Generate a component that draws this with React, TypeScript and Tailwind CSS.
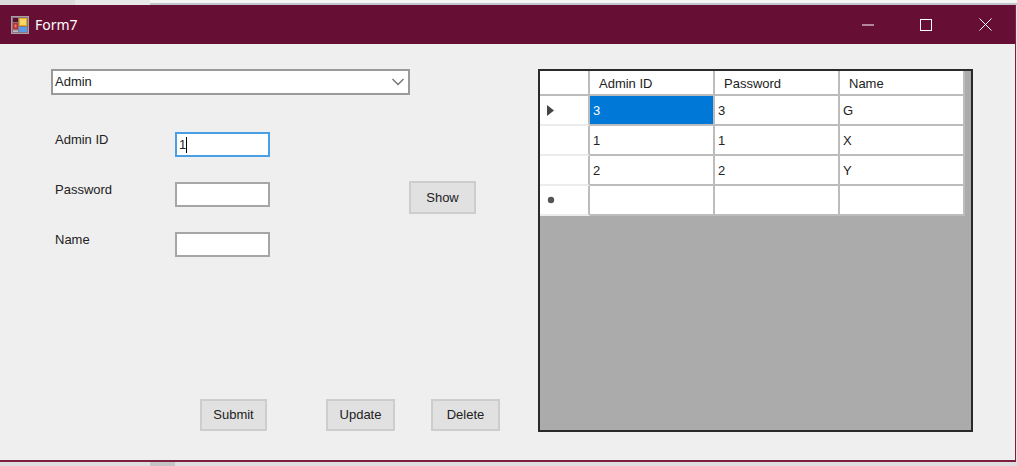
const font = "font-['Liberation_Sans',Arial,sans-serif]";

const columns = ["Admin ID", "Password", "Name"];
const rows = [
  ["3", "3", "G"],
  ["1", "1", "X"],
  ["2", "2", "Y"],
  ["", "", ""],
];

function FormIcon() {
  return (
    <svg width="18" height="18" viewBox="0 0 18 18" className="shrink-0">
      <rect x="0.5" y="0.5" width="17" height="17" fill="#8c7480" stroke="#a9a0a4" />
      <rect x="2" y="2" width="5" height="4" fill="#5a1030" />
      <rect x="2" y="7" width="5" height="6" fill="#b8322f" />
      <rect x="3.5" y="8.5" width="2" height="3" fill="#e87a6a" />
      <rect x="8" y="2" width="8" height="8" fill="#e0a820" />
      <rect x="9" y="3" width="6" height="6" fill="#f7d860" />
      <rect x="8" y="11" width="8" height="5" fill="#5b9be8" />
      <rect x="2" y="14.5" width="5" height="1.5" fill="#c9bcc2" />
    </svg>
  );
}

function WindowButtons() {
  return (
    <div className="flex items-center">
      <svg width="12" height="2" viewBox="0 0 12 2" className="mr-[46px]">
        <rect width="12" height="1" y="0.5" fill="#fff" />
      </svg>
      <svg width="12" height="12" viewBox="0 0 12 12" className="mr-[47px]">
        <rect x="0.5" y="0.5" width="11" height="11" fill="none" stroke="#fff" />
      </svg>
      <svg width="13" height="13" viewBox="0 0 13 13" className="mr-[23px]">
        <path d="M0.5 0.5L12.5 12.5M12.5 0.5L0.5 12.5" stroke="#fff" strokeWidth="1" />
      </svg>
    </div>
  );
}

function Field({ label, focused, children }: { label: string; focused?: boolean; children?: React.ReactNode }) {
  return (
    <div className="flex h-[25px] items-start">
      <span className="w-[124px] pl-[4px] text-[13px] leading-[16px] text-[#222]">{label}</span>
      <div
        className={`flex h-[25px] w-[95px] shrink-0 items-center bg-white pl-[2px] text-[13px] text-[#222] ${
          focused ? "border-2 border-[#4a9ee3]" : "border-2 border-[#a6a6a6]"
        }`}
      >
        {focused && (
          <>
            1<span className="h-[16px] w-px bg-black" />
          </>
        )}
      </div>
      {children}
    </div>
  );
}

function FormButton({ label, className }: { label: string; className: string }) {
  return (
    <button
      type="button"
      className={`shrink-0 border-2 border-[#cdcdcd] bg-[#e1e1e1] text-[13px] text-[#222] ${className}`}
    >
      {label}
    </button>
  );
}

function DataGrid() {
  const cell = "flex items-center border-r-2 border-b-2 border-[#bcbcbc] text-[13px]";
  return (
    <div className="mt-[25px] h-[363px] w-[435px] border-2 border-[#2a2a2a] bg-[#ababab]">
      <div className="grid w-[425px] grid-cols-[50px_125px_125px_125px] grid-rows-[25px_30px_30px_30px_30px]">
        <div className="border-r-2 border-b-2 border-[#bcbcbc] bg-white" />
        {columns.map((c) => (
          <div key={c} className={`${cell} bg-white pl-[9px] pt-[2px] text-[#222]`}>
            {c}
          </div>
        ))}
        {rows.map((row, r) => (
          <div key={r} className="contents">
            <div className="flex items-center border-r-2 border-b-2 border-r-[#bcbcbc] border-b-[#ececec] bg-white">
              {r === 0 && (
                <svg width="7" height="11" viewBox="0 0 7 11" className="ml-[7px]">
                  <path d="M0 0L7 5.5L0 11Z" fill="#444" />
                </svg>
              )}
              {r === 3 && (
                <svg width="8" height="8" viewBox="0 0 8 8" className="ml-[7px]">
                  <circle cx="4" cy="4" r="3.2" fill="#555" />
                </svg>
              )}
            </div>
            {row.map((v, c) => (
              <div
                key={c}
                className={`${cell} pl-[3px] pt-px ${
                  r === 0 && c === 0 ? "bg-[#0078d7] text-white" : "bg-white text-[#222]"
                }`}
              >
                {v}
              </div>
            ))}
          </div>
        ))}
      </div>
    </div>
  );
}

export default function App() {
  return (
    <div className={`h-[466px] w-[1017px] overflow-hidden bg-[#e4e4e4] ${font}`}>
      <div className="flex h-[5px]">
        <div className="w-[75px] bg-[#dcdcdc]" />
        <div className="w-[75px] bg-[#e8e8e8]" />
        <div className="flex-1 border-b-2 border-[#c2c6cc] bg-[#f5f5f5]" />
      </div>
      <div className="flex h-[457px] w-[1016px] flex-col border-r border-b-2 border-[#7d1f40] bg-[#efefef]">
        <div className="flex h-[39px] shrink-0 items-center justify-between bg-[#660e33]">
          <div className="flex items-center gap-[6px] pl-[11px]">
            <FormIcon />
            <span className="font-['Noto_Sans',sans-serif] text-[14px] text-white">Form7</span>
          </div>
          <WindowButtons />
        </div>
        <div className="flex flex-1">
          <div className="flex w-[538px] shrink-0 flex-col pl-[51px] pt-[25px]">
            <div className="flex h-[26px] w-[359px] items-center justify-between border-2 border-[#9a9a9a] bg-white pl-[2px] pr-[3px] text-[13px] text-[#222]">
              Admin
              <svg width="14" height="8" viewBox="0 0 14 8">
                <path d="M1.5 1L7 6.5L12.5 1" fill="none" stroke="#707070" strokeWidth="1.3" />
              </svg>
            </div>
            <div className="mt-[37px] flex flex-col gap-[25px]">
              <Field label="Admin ID" focused />
              <Field label="Password">
                <FormButton label="Show" className="-mt-px ml-[139px] h-[33px] w-[67px]" />
              </Field>
              <Field label="Name" />
            </div>
            <div className="mt-auto mb-[29px] flex pl-[149px]">
              <FormButton label="Submit" className="h-[32px] w-[67px]" />
              <FormButton label="Update" className="ml-[59px] h-[32px] w-[69px]" />
              <FormButton label="Delete" className="ml-[36px] h-[32px] w-[69px]" />
            </div>
          </div>
          <DataGrid />
        </div>
      </div>
      <div className="flex h-[4px] bg-[#dedede]">
        <div className="ml-[150px] w-[25px] bg-[#c4c4c4]" />
      </div>
    </div>
  );
}
